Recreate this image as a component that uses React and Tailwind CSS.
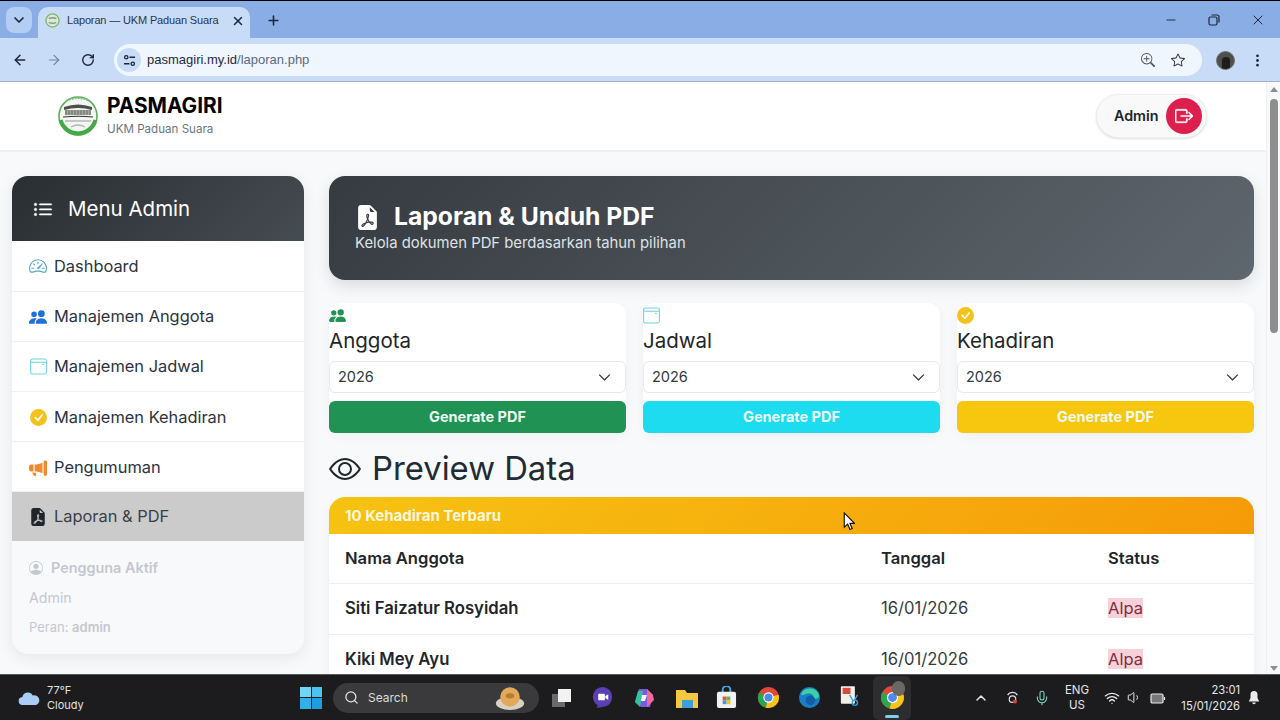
import React from "react";
import {
  BsSpeedometer2, BsPeopleFill, BsCheckCircleFill, BsMegaphoneFill, BsFileEarmarkPdfFill,
  BsPersonCircle, BsBoxArrowRight, BsListUl, BsEye, BsChevronDown, BsStar, BsZoomIn, BsThreeDotsVertical,
} from "react-icons/bs";
import { ArrowLeft, ArrowRight, RotateCw, X, Plus, Minus, ChevronDown, ChevronUp, Search, Mic, Wifi, Volume1 } from "lucide-react";

const Cal = ({ className }) => (
  <svg viewBox="0 0 16 16" className={className} fill="none" stroke="currentColor">
    <rect x="0.6" y="0.9" width="14.8" height="14.2" rx="1.8" strokeWidth="1" />
    <path d="M1 4h14" strokeWidth="1" />
    <rect x="11.4" y="5.6" width="1.6" height="1" fill="currentColor" stroke="none" />
  </svg>
);

const Logo = () => (
  <svg viewBox="0 0 40 40" className="w-10 h-10 shrink-0">
    <circle cx="20" cy="20" r="19" fill="#f3f6f1" stroke="#5fae5c" strokeWidth="1.6" />
    <path d="M2.6 24A18 18 0 0 0 37.4 24" stroke="#43a847" strokeWidth="4" fill="none" />
    <path d="M8 5q12-6 24 0" stroke="#7ab97a" strokeWidth="2" fill="none" strokeDasharray="2 1" />
    <path d="M6 11q14-5 28 0l0 3q-14-4-28 0z" fill="#4c4f4c" />
    <path d="M7 14h26v5H7z" fill="#a3a6a2" />
    <path d="M8 14v5M11 14v5M14 14v5M17 14v5M20 14v5M23 14v5M26 14v5M29 14v5M32 14v5" stroke="#555" strokeWidth="0.7" />
    <path d="M5 21q15-1.5 30 0" stroke="#333" strokeWidth="1.2" fill="none" />
    <path d="M7 25h26" stroke="#999" strokeWidth="1" />
    <path d="M13 31q7-4 14 0" stroke="#b5b5b5" strokeWidth="1.4" fill="none" />
  </svg>
);

const ChromeIcon = ({ className }) => (
  <svg viewBox="0 0 24 24" className={className}>
    <circle cx="12" cy="12" r="11" fill="#e2483a" />
    <path d="M12 12 L22.5 9 A11 11 0 0 1 9 22.6 Z" fill="#f5c518" />
    <path d="M12 12 L9 22.6 A11 11 0 0 1 2.3 6.6 Z" fill="#2ea44f" />
    <circle cx="12" cy="12" r="5.4" fill="#fff" />
    <circle cx="12" cy="12" r="4.2" fill="#4a8bf0" />
  </svg>
);

const navItems = [
  { label: "Dashboard", icon: <BsSpeedometer2 className="w-[18px] h-[18px] text-[#5aa6c9]" />, h: "h-[51px]" },
  { label: "Manajemen Anggota", icon: <BsPeopleFill className="w-[18px] h-[18px] text-[#1f6fd6]" />, h: "h-[50px]" },
  { label: "Manajemen Jadwal", icon: <Cal className="w-[17px] h-[17px] text-[#6fd3dc]" />, h: "h-[50px]" },
  { label: "Manajemen Kehadiran", icon: <BsCheckCircleFill className="w-[17px] h-[17px] text-[#f5c21b]" />, h: "h-[50px] pt-px" },
  { label: "Pengumuman", icon: <BsMegaphoneFill className="w-[18px] h-[18px] text-[#ee8a2f]" />, h: "h-[50px] pt-[2px]" },
];

const cards = [
  { title: "Anggota", icon: <BsPeopleFill className="w-[17px] h-[17px] text-[#1f9254]" />, btn: "bg-[#1f9254]" },
  { title: "Jadwal", icon: <Cal className="w-[17px] h-[17px] text-[#6fd3dc]" />, btn: "bg-[#1ddcef]" },
  { title: "Kehadiran", icon: <BsCheckCircleFill className="w-[17px] h-[17px] text-[#f5c21b]" />, btn: "bg-[#f7c70f]" },
];

const rows = [
  ["Siti Faizatur Rosyidah", "16/01/2026", "Alpa"],
  ["Kiki Mey Ayu", "16/01/2026", "Alpa"],
];

function TabBar() {
  return (
    <div className="h-[38px] bg-[#8aade5] border-t border-black flex items-end shrink-0 relative font-['Liberation_Sans',sans-serif]">
      <div className="w-[26px] h-[26px] ml-[6px] mb-[5px] rounded-lg bg-[#b4cdf2] flex items-center justify-center">
        <ChevronDown className="w-4 h-4 text-[#1c2738]" strokeWidth={2.5} />
      </div>
      <div className="w-[212px] h-[31px] ml-[6px] bg-[#c9dcf7] rounded-t-[10px] flex items-center pl-[7px] pr-[3px] pb-[4px]">
        <svg viewBox="0 0 16 16" className="w-[15px] h-[15px] shrink-0">
          <circle cx="8" cy="8" r="7" fill="#dbe8d6" stroke="#7db46c" strokeWidth="1.4" />
          <path d="M4 6q4-2 8 0M4 10q4 2 8 0" stroke="#8a9a80" strokeWidth="1.5" fill="none" />
        </svg>
        <span className="ml-[7px] text-[11px] tracking-[-0.15px] text-[#2a3648] whitespace-nowrap flex-1">Laporan — UKM Paduan Suara</span>
        <X className="w-[14px] h-[14px] shrink-0 text-[#1c2738] mr-[2px]" strokeWidth={2.5} />
      </div>
      <Plus className="w-[15px] h-[15px] text-[#1c2738] ml-[16px] mb-[10px]" strokeWidth={2.5} />
      <div className="flex-1" />
      <div className="flex items-center gap-[30px] mb-[10px] mr-[14px] text-[#1c2738]">
        <Minus className="w-[14px] h-[14px]" strokeWidth={1.6} />
        <svg viewBox="0 0 12 12" className="w-[12px] h-[12px]" fill="none" stroke="currentColor" strokeWidth="1.2">
          <rect x="1" y="3" width="8" height="8" rx="1.5" />
          <path d="M3.5 1h5.5a2 2 0 0 1 2 2v5.5" />
        </svg>
        <X className="w-[16px] h-[16px]" strokeWidth={1.5} />
      </div>
    </div>
  );
}

function Toolbar() {
  return (
    <div className="h-[44px] bg-[#c9dcf7] border-b border-[#a3b0c6] flex items-center shrink-0 pt-[6px] pb-[5px] font-['Liberation_Sans',sans-serif]">
      <ArrowLeft className="w-[16px] h-[16px] ml-[12px] text-[#1c2738]" strokeWidth={2.2} />
      <ArrowRight className="w-[16px] h-[16px] ml-[18px] text-[#75869f]" strokeWidth={1.8} />
      <RotateCw className="w-[14px] h-[14px] ml-[19px] text-[#1c2738]" strokeWidth={2.4} />
      <div className="ml-[19px] w-[1088px] h-[32px] rounded-full bg-[#f0f6fe] flex items-center pl-[3px] pr-[17px]">
        <div className="w-[24px] h-[24px] rounded-full bg-[#c9dcf7] flex items-center justify-center">
          <svg viewBox="0 0 14 14" className="w-[13px] h-[13px]" fill="none" stroke="#1c2738" strokeWidth="1.4">
            <circle cx="3.5" cy="3.5" r="1.8" />
            <path d="M7 3.5h6M1 10.5h6" />
            <circle cx="10.5" cy="10.5" r="1.8" />
          </svg>
        </div>
        <span className="ml-[6px] text-[13px] text-[#1f2a3a]">pasmagiri.my.id<span className="text-[#5b6a7f]">/laporan.php</span></span>
        <div className="flex-1" />
        <BsZoomIn className="w-[14px] h-[14px] text-[#445064]" />
        <BsStar className="w-[14px] h-[14px] ml-[16px] text-[#2a3648]" />
      </div>
      <div className="ml-[14px] w-[19px] h-[19px] rounded-full bg-[#4c4f4c] border border-[#6e7570] overflow-hidden flex items-end justify-center">
        <div className="w-[8px] h-[12px] rounded-t-full bg-[#1d1d1d]" />
      </div>
      <BsThreeDotsVertical className="w-[15px] h-[15px] ml-[15px] text-[#1c2738]" />
    </div>
  );
}

function Header() {
  return (
    <div className="h-[70px] bg-white border-b-2 border-[#eef0f2] flex items-center pl-[58px] pr-[59px] shrink-0">
      <Logo />
      <div className="ml-[9px] -mt-[2px]">
        <div className="text-[20.8px] font-bold leading-[26px] text-black">PASMAGIRI</div>
        <div className="text-[11.6px] leading-[18px] text-[#6c757d] mt-[1px]">UKM Paduan Suara</div>
      </div>
      <div className="flex-1" />
      <div className="w-[111px] h-[44px] rounded-full bg-[#f9f9fa] border border-[#eceef0] shadow-sm flex items-center pl-[17px]">
        <span className="text-[14.3px] font-semibold text-[#212529]">Admin</span>
        <div className="ml-[8px] w-[36px] h-[36px] rounded-full bg-[#dc1f4d] flex items-center justify-center">
          <BsBoxArrowRight className="w-[18px] h-[18px] text-white" strokeWidth={0.5} />
        </div>
      </div>
    </div>
  );
}

function Sidebar() {
  return (
    <aside className="w-[292px] h-[478px] rounded-2xl overflow-hidden bg-[#f8f9fb] shadow-[0_4px_16px_rgba(0,0,0,0.08)] shrink-0">
      <div className="h-[65px] pt-[2px] bg-linear-135 from-[#2a2e32] to-[#454c52] flex items-center pl-[21px]">
        <BsListUl className="w-[20px] h-[20px] text-white" strokeWidth={0.4} />
        <span className="ml-[15px] text-[20.5px] text-white">Menu Admin</span>
      </div>
      <nav className="flex flex-col bg-white">
        {navItems.map((it) => (
          <div key={it.label} className={`${it.h} border-b border-[#eef0f2] flex items-center pl-[17px]`}>
            <span className="w-[18px] flex justify-center">{it.icon}</span>
            <span className="ml-[7px] text-[16.4px] text-[#2b3340]">{it.label}</span>
          </div>
        ))}
        <div className="h-[49px] bg-[#cbcbcb] flex items-center pl-[17px]">
          <span className="w-[18px] flex justify-center">
            <BsFileEarmarkPdfFill className="w-[18px] h-[18px] text-[#212529]" />
          </span>
          <span className="ml-[7px] text-[16.4px] text-[#3a3f46]">Laporan &amp; PDF</span>
        </div>
      </nav>
      <div className="pl-[17px] pt-[17px]">
        <div className="flex items-center h-[20px]">
          <BsPersonCircle className="w-[14px] h-[14px] text-[#c4c8ce]" />
          <span className="ml-[8px] text-[14.4px] font-semibold text-[#c4c8ce]">Pengguna Aktif</span>
        </div>
        <div className="mt-[10px] text-[14.2px] leading-[20px] text-[#c4c8ce]">Admin</div>
        <div className="mt-[9px] text-[13px] leading-[20px] text-[#c4c8ce]">
          Peran: <span className="font-semibold">admin</span>
        </div>
      </div>
    </aside>
  );
}

function Main() {
  return (
    <main className="w-[925px] shrink-0 ml-[25px]">
      <section className="h-[104px] rounded-2xl bg-linear-135 from-[#363b41] to-[#5f676e] shadow-[0_6px_16px_rgba(0,0,0,0.12)] pl-[26px] pt-[25px]">
        <div className="flex items-center h-[32px]">
          <BsFileEarmarkPdfFill className="w-[25px] h-[25px] text-white" />
          <h1 className="ml-[14px] text-[24.7px] font-bold text-white">Laporan &amp; Unduh PDF</h1>
        </div>
        <p className="text-[14.85px] leading-[20px] text-[#dfe2e5]">Kelola dokumen PDF berdasarkan tahun pilihan</p>
      </section>

      <section className="grid grid-cols-3 gap-[17px] mt-[23px]">
        {cards.map((c) => (
          <div key={c.title} className="h-[130px] bg-white rounded-xl shadow-[0_4px_12px_rgba(0,0,0,0.04)]">
            <div className="h-[21px] flex items-end">{c.icon}</div>
            <div className="text-[20.5px] leading-[33px] text-[#212529]">{c.title}</div>
            <div className="h-[32px] mt-[4px] rounded-md border border-[#e6e8eb] bg-white flex items-center justify-between pl-[8px] pr-[14px]">
              <span className="text-[14.5px] text-[#343a40]">2026</span>
              <BsChevronDown className="w-[13px] h-[13px] text-[#343a40]" strokeWidth={0.8} />
            </div>
            <div className={`h-[32px] mt-[8px] pb-px rounded-md ${c.btn} flex items-center justify-center text-[14.5px] font-bold text-[#eefbf3]`}>
              Generate PDF
            </div>
          </div>
        ))}
      </section>

      <div className="flex items-center h-[40px] mt-[16px]">
        <BsEye className="w-[32px] h-[32px] text-[#212529]" />
        <h2 className="ml-[11px] text-[32.8px] text-[#212b36]">Preview Data</h2>
      </div>

      <section className="mt-[8px] bg-white rounded-t-2xl overflow-hidden shadow-[0_4px_12px_rgba(0,0,0,0.05)]">
        <div className="h-[37px] pt-[2px] bg-linear-135 from-[#f6c312] to-[#f59a08] flex items-center pl-[16px] text-[15px] font-bold text-[#fff7dc]">
          10 Kehadiran Terbaru
        </div>
        <div className="grid grid-cols-[536px_227px_1fr] h-[50px] items-center pl-[16px] border-b border-[#eceef0] text-[16.6px] font-semibold text-[#212529]">
          <div>Nama Anggota</div>
          <div>Tanggal</div>
          <div>Status</div>
        </div>
        {rows.map((r) => (
          <div key={r[0]} className="grid grid-cols-[536px_227px_1fr] h-[51px] pb-[1px] items-center pl-[16px] border-b border-[#eceef0] text-[#212529]">
            <div className="text-[16.7px] font-semibold">{r[0]}</div>
            <div className="text-[16.6px] text-[#343a40]">{r[1]}</div>
            <div><span className="text-[16.5px] bg-[#f8d0da] text-[#7a2f40]">{r[2]}</span></div>
          </div>
        ))}
      </section>
    </main>
  );
}

function Taskbar() {
  return (
    <div className="h-[46px] bg-[#1c1c1e] border-t border-[#55585c] flex items-center shrink-0 relative text-white">
      <svg viewBox="0 0 24 16" className="w-[24px] h-[16px] ml-[17px]">
        <path d="M6 15a4 4 0 0 1-.6-8 5.5 5.5 0 0 1 10.4-1.4A4.8 4.8 0 0 1 19 15z" fill="#a9cdf5" />
      </svg>
      <div className="ml-[6px] w-[39px] text-[11px] leading-[15px] text-[#e2e2e2]">
        <div>77°F</div>
        <div>Cloudy</div>
      </div>
      <div className="ml-[214px] w-[22px] h-[22px] grid grid-cols-2 grid-rows-2 gap-[1px]">
        <div className="bg-[#6fd6f5]" /><div className="bg-[#4cc4ef]" />
        <div className="bg-[#2fb2e8]" /><div className="bg-[#1d9fdf]" />
      </div>
      <div className="ml-[11px] w-[206px] h-[30px] rounded-full bg-[#3a3a3c] flex items-center pl-[11px]">
        <Search className="w-[15px] h-[15px] text-[#e6e6e6]" />
        <span className="ml-[9px] w-[39px] text-[12px] text-[#dcdcdc]">Search</span>
        <svg viewBox="0 0 28 24" className="w-[32px] h-[26px] ml-[87px]">
          <ellipse cx="14" cy="17" rx="13" ry="6" fill="#d8d2c4" />
          <circle cx="14" cy="11" r="9" fill="#e3a95a" />
          <ellipse cx="14" cy="10" rx="4" ry="2.5" fill="#b97a32" />
        </svg>
      </div>
      <svg viewBox="0 0 22 22" className="w-[22px] h-[22px] ml-[12px]">
        <rect x="1" y="7" width="13" height="13" fill="#6a6a6a" />
        <rect x="7" y="2" width="13" height="13" fill="#f2f2f2" />
      </svg>
      <svg viewBox="0 0 22 24" className="w-[21px] h-[23px] ml-[19px]">
        <path d="M11 1a10 10 0 0 1 10 10v1a10 10 0 0 1-10 10l-6 1 1-3a10 10 0 0 1-5-8v-1a10 10 0 0 1 10-10z" fill="#5a3fb5" />
        <rect x="6.5" y="8" width="7" height="7" rx="1" fill="#fff" />
        <path d="M14 10.5l3-2v6l-3-2z" fill="#fff" />
      </svg>
      <svg viewBox="0 0 22 22" className="w-[22px] h-[22px] ml-[20px]">
        <path d="M6 2h8l6 6-3 12H8L2 15z" fill="#7a5be0" />
        <path d="M2 15l3-11 5 0-3 16z" fill="#37c0a0" />
        <path d="M14 2l6 6 1 5-7 7z" fill="#ee6a9a" />
        <path d="M9 8h5l-2 6H8z" fill="#f6f0ff" />
      </svg>
      <svg viewBox="0 0 24 22" className="w-[24px] h-[22px] ml-[20px]">
        <path d="M1 3h9l2 3h11v15H1z" fill="#f6c83f" />
        <rect x="7" y="13" width="11" height="8" fill="#3f9fd8" />
      </svg>
      <svg viewBox="0 0 22 24" className="w-[21px] h-[23px] ml-[17px]">
        <path d="M7 7V4a4 4 0 0 1 8 0v3" stroke="#4aa7e0" strokeWidth="2" fill="none" />
        <rect x="1" y="6" width="20" height="17" rx="2" fill="#f1f1f1" />
        <rect x="7" y="11" width="4" height="4" fill="#e8503f" /><rect x="11" y="11" width="4" height="4" fill="#5fb94a" />
        <rect x="7" y="15" width="4" height="4" fill="#3b9be0" /><rect x="11" y="15" width="4" height="4" fill="#f4c026" />
      </svg>
      <ChromeIcon className="w-[23px] h-[23px] ml-[20px]" />
      <svg viewBox="0 0 24 24" className="w-[23px] h-[23px] ml-[18px]">
        <circle cx="12" cy="12" r="11" fill="#1b7fc6" />
        <path d="M3 9a10 10 0 0 1 19 1c0 3-3 4-6 3 1-4-3-6-7-5-3 1-5 2-6 1z" fill="#3cd0a5" />
        <circle cx="13" cy="15" r="5" fill="#0f5fa8" />
      </svg>
      <svg viewBox="0 0 24 28" className="w-[21px] h-[25px] ml-[19px]">
        <rect x="1" y="1" width="16" height="20" rx="1" fill="#f3f0ea" />
        <rect x="3" y="3" width="9" height="7" fill="#d84a3c" />
        <circle cx="17" cy="20" r="3" fill="none" stroke="#3aa0dc" strokeWidth="1.6" />
        <path d="M11 11l4 7M20 11l-4 7" stroke="#3aa0dc" strokeWidth="1.6" />
      </svg>
      <div className="ml-[12px] w-[38px] h-[44px] rounded-md bg-[#2d2d30] relative flex items-center justify-center">
        <ChromeIcon className="w-[25px] h-[25px]" />
        <div className="absolute top-[5px] right-[6px] w-[13px] h-[15px] rounded-full bg-[#6b6864]" />
        <div className="absolute bottom-[2px] w-[14px] h-[3px] rounded-full bg-[#7fd0ef]" />
      </div>
      <ChevronUp className="w-[16px] h-[16px] ml-[62px] text-[#e6e6e6]" strokeWidth={2.2} />
      <svg viewBox="0 0 16 18" className="w-[13px] h-[15px] ml-[17px]" fill="none" stroke="#e0e0e0" strokeWidth="1.5">
        <path d="M2 6a7 7 0 0 1 12 0" />
        <circle cx="8" cy="11" r="4" />
        <circle cx="11" cy="14" r="2.5" fill="#e23b3b" stroke="none" />
      </svg>
      <Mic className="w-[16px] h-[16px] ml-[15px] text-[#7fd3c0]" strokeWidth={1.6} />
      <div className="ml-[12px] w-[30px] text-center text-[11.5px] leading-[15px] text-[#e6e6e6]">
        <div>ENG</div>
        <div>US</div>
      </div>
      <Wifi className="w-[16px] h-[16px] ml-[12px] text-[#eaeaea]" strokeWidth={2} />
      <Volume1 className="w-[15px] h-[15px] ml-[7px] text-[#eaeaea]" strokeWidth={1.6} />
      <svg viewBox="0 0 16 12" className="w-[16px] h-[12px] ml-[8px]" fill="none" stroke="#eaeaea" strokeWidth="1.2">
        <rect x="1" y="2" width="12" height="9" rx="1.2" fill="#777" />
        <path d="M14.5 5v3" />
      </svg>
      <div className="flex-1 text-right text-[11.2px] leading-[16px] text-[#e6e6e6]">
        <div>23:01</div>
        <div>15/01/2026</div>
      </div>
      <svg viewBox="0 0 16 18" className="w-[14px] h-[16px] ml-[7px] mr-[19px]" fill="#eaeaea">
        <path d="M8 1a4 4 0 0 0-4 4v4l-2 4h12l-2-4V5a4 4 0 0 0-4-4zM6 14a2 2 0 0 0 4 0z" />
      </svg>
    </div>
  );
}

export default function App() {
  return (
    <div className="w-[1280px] h-[720px] overflow-hidden flex flex-col relative bg-[#f8f9fb] font-['Inter','Liberation_Sans',sans-serif]">
      <TabBar />
      <Toolbar />
      <div className="flex-1 min-h-0 flex overflow-hidden">
        <div className="w-[1266px] shrink-0 flex flex-col min-h-0 overflow-hidden">
          <Header />
          <div className="flex-1 min-h-0 overflow-hidden flex items-start pl-[12px] pt-[24px]">
            <Sidebar />
            <Main />
          </div>
        </div>
        <div className="w-[14px] bg-[#f8f9fb] border-l border-[#f0f0f2] flex flex-col items-center relative">
          <div className="mt-[5px] w-0 h-0 border-l-[4px] border-r-[4px] border-b-[5px] border-l-transparent border-r-transparent border-b-[#8e8e8e]" />
          <div className="mt-[7px] w-[8px] h-[234px] rounded-full bg-[#8e8e8e]" />
          <div className="absolute bottom-[3px] w-0 h-0 border-l-[4px] border-r-[4px] border-t-[5px] border-l-transparent border-r-transparent border-t-[#8e8e8e]" />
        </div>
      </div>
      <Taskbar />
      <svg viewBox="0 0 12 20" className="absolute left-[843px] top-[512px] w-[12px] h-[19px]">
        <path d="M1 1v15l3.6-3.2 2.4 5.6 2.4-1-2.4-5.4h4.8z" fill="#fff" stroke="#111" strokeWidth="1.2" />
      </svg>
    </div>
  );
}
